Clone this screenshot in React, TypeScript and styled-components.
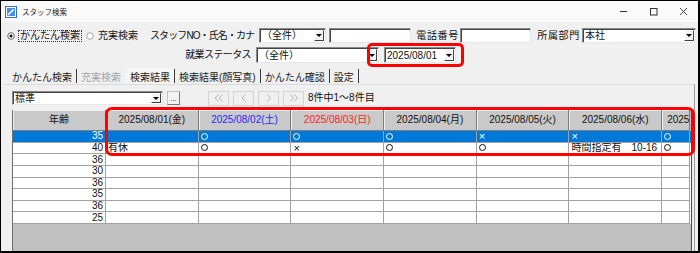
import React from 'react';
import styled, { createGlobalStyle } from 'styled-components';

const GlobalStyle = createGlobalStyle`
  html, body {
    margin: 0;
    padding: 0;
    background: #fff;
  }
  body {
    font-family: "Liberation Sans", "Noto Sans CJK JP", sans-serif;
    font-size: 10px;
    color: #111;
  }
  * {
    box-sizing: border-box;
  }
`;

const Window = styled.div`
  position: relative;
  width: 700px;
  height: 253px;
  border-style: solid;
  border-color: #000;
  border-width: 1px 2px 2px 1px;
  display: flex;
  flex-direction: column;
  background: #f0f0f0;
  overflow: hidden;
`;

const TitleBar = styled.div`
  height: 21px;
  flex: none;
  display: flex;
  align-items: center;
  padding-left: 4px;
  background: #fafafa;
`;

const TitleText = styled.span`
  margin-left: 5px;
  font-size: 7.5px;
  color: #222;
`;

const WinControls = styled.div`
  margin-left: auto;
  display: flex;
  height: 100%;
`;

const WinButton = styled.div`
  width: 30px;
  height: 100%;
  display: flex;
  align-items: center;
  justify-content: center;
`;

const FormRow = styled.div<{ $mt: number; $h: number }>`
  display: flex;
  align-items: center;
  height: ${p => p.$h}px;
  margin-top: ${p => p.$mt}px;
  padding-left: 6px;
  flex: none;
`;

const RadioWrap = styled.span<{ $ml?: number }>`
  display: flex;
  margin-left: ${p => p.$ml ?? 0}px;
`;

const RadioLabel = styled.span<{ $focus?: boolean; $ml?: number }>`
  margin-left: ${p => p.$ml ?? 3}px;
  padding: 0 1px;
  line-height: 10px;
  white-space: nowrap;
  border: 1px dotted ${p => (p.$focus ? '#333' : 'transparent')};
`;

const Label = styled.span<{ $w: number; $ml?: number; $ls?: number }>`
  width: ${p => p.$w}px;
  margin-left: ${p => p.$ml ?? 0}px;
  letter-spacing: ${p => p.$ls ?? 0}px;
  text-align: right;
  white-space: nowrap;
  line-height: 10px;
`;

const Sunken = styled.div<{ $w: number; $ml?: number }>`
  width: ${p => p.$w}px;
  margin-left: ${p => p.$ml ?? 0}px;
  height: 100%;
  display: flex;
  align-items: center;
  background: #fff;
  border-style: solid;
  border-width: 1px;
  border-color: #8a8a8a #e6e6e6 #e6e6e6 #8a8a8a;
  box-shadow: inset 1px 1px 0 #444;
  padding-left: 2px;
  flex: none;
`;

const SelectText = styled.span`
  flex: 1;
  white-space: nowrap;
  overflow: hidden;
  line-height: 10px;
  padding-top: 1px;
`;

const DropBtn = styled.span`
  width: 10px;
  height: calc(100% - 2px);
  margin-right: 1px;
  background: #f2f2f2;
  border: 1px solid;
  border-color: #fff #404040 #404040 #fff;
  display: flex;
  align-items: center;
  justify-content: center;
  flex: none;
  &::after {
    content: '';
    border-left: 3px solid transparent;
    border-right: 3px solid transparent;
    border-top: 3px solid #000;
  }
`;

const TabStrip = styled.div`
  display: flex;
  align-items: center;
  height: 16px;
  margin-top: 5px;
  padding-left: 7px;
  flex: none;
`;

const Tab = styled.span<{ $disabled?: boolean; $active?: boolean }>`
  padding: 0 4px;
  height: 100%;
  display: flex;
  align-items: center;
  white-space: nowrap;
  color: ${p => (p.$disabled ? '#a3a3a3' : '#1a1a1a')};
  background: ${p => (p.$active ? '#f6f6f6' : 'transparent')};
`;

const TabSep = styled.span<{ $hidden?: boolean }>`
  width: 1px;
  height: 14px;
  background: ${p => (p.$hidden ? 'transparent' : '#3a3a3a')};
`;

const Panel = styled.div`
  flex: 1;
  min-height: 0;
  display: flex;
  flex-direction: column;
  margin: 0 3px 0 3px;
  border-top: 1px solid #dadada;
  border-right: 1px solid #9a9a9a;
  padding-top: 6px;
`;

const Toolbar = styled.div`
  display: flex;
  align-items: center;
  height: 14px;
  padding-left: 8px;
  flex: none;
`;

const DotsButton = styled.div`
  width: 13px;
  height: 14px;
  margin-left: 4px;
  background: #f3f3f3;
  border: 1px solid;
  border-color: #c4c4c4 #7a7a7a #7a7a7a #c4c4c4;
  display: flex;
  align-items: flex-end;
  justify-content: center;
  font-size: 8px;
  line-height: 8px;
  padding-bottom: 1px;
`;

const Pager = styled.div`
  display: flex;
  gap: 4px;
  margin-left: 28px;
  height: 15px;
`;

const PageButton = styled.div`
  width: 21px;
  height: 100%;
  background: #f0f0f0;
  border: 1px solid #d2d2d2;
  display: flex;
  align-items: center;
  justify-content: center;
`;

const PageText = styled.span`
  margin-left: 4px;
  white-space: nowrap;
  line-height: 10px;
`;

const Grid = styled.div`
  flex: 1;
  min-height: 0;
  margin: 5px 0 0 8px;
  width: 680px;
  background: #c0c0c0;
  border-left: 1px solid #6e6e6e;
  border-right: 1px solid #4a4a4a;
  overflow: hidden;
`;

const COLS = '93px repeat(6, 92.7px) 28px';

const HeaderRow = styled.div`
  display: grid;
  grid-template-columns: ${COLS};
  height: 21px;
`;

const HeaderCell = styled.div<{ $color?: string; $clip?: boolean }>`
  background: #c9c9c9;
  color: ${p => p.$color ?? '#111'};
  border-right: 1px solid #7c7c7c;
  border-bottom: 1px solid #7c7c7c;
  box-shadow: inset 1px 1px 0 #efefef;
  display: flex;
  align-items: center;
  justify-content: ${p => (p.$clip ? 'flex-start' : 'center')};
  padding-left: ${p => (p.$clip ? 5 : 0)}px;
  white-space: nowrap;
  overflow: hidden;
  line-height: 10px;
`;

const Row = styled.div<{ $selected?: boolean }>`
  display: grid;
  grid-template-columns: ${COLS};
  height: 11.625px;
  background: ${p => (p.$selected ? '#0078d7' : '#fff')};
  color: ${p => (p.$selected ? '#fff' : '#111')};
`;

const Cell = styled.div<{ $right?: boolean }>`
  border-right: 1px solid #a2a2a2;
  border-bottom: 1px solid #a2a2a2;
  display: flex;
  align-items: center;
  justify-content: ${p => (p.$right ? 'flex-end' : 'flex-start')};
  padding: 0 ${p => (p.$right ? 2 : 0)}px 0 ${p => (p.$right ? 0 : 2)}px;
  line-height: 10px;
  white-space: nowrap;
  overflow: hidden;
`;

const Circle = styled.span`
  width: 7px;
  height: 7px;
  border: 1px solid currentColor;
  border-radius: 50%;
`;

const Cross = styled.span`
  font-size: 11px;
  line-height: 10px;
`;

const TimeCell = styled.span`
  flex: 1;
  display: flex;
  justify-content: space-between;
  padding-right: 4px;
`;

const Highlight = styled.div<{ $x: number; $y: number; $w: number; $h: number; $r: number }>`
  position: absolute;
  left: ${p => p.$x}px;
  top: ${p => p.$y}px;
  width: ${p => p.$w}px;
  height: ${p => p.$h}px;
  border: 3px solid #ff0000;
  border-radius: ${p => p.$r}px;
  pointer-events: none;
`;

const Radio = ({ checked }: { checked?: boolean }) => (
  <svg width="8" height="8" viewBox="0 0 8 8">
    <circle cx="4" cy="4" r="3.3" fill="#fff" stroke={checked ? '#555' : '#9a9a9a'} strokeWidth="0.9" />
    {checked && <circle cx="4" cy="4" r="1.5" fill="#111" />}
  </svg>
);

const AppIcon = () => (
  <svg width="12" height="12" viewBox="0 0 12 12">
    <rect x="0.5" y="0.5" width="11" height="11" fill="#fff" stroke="#2f6fc9" />
    <rect x="2" y="2" width="8" height="8" fill="#4a8ee0" />
    <path d="M3.2 8.8 L8.5 3.5" stroke="#fff" strokeWidth="1.6" />
    <path d="M2.6 9.4 L3 7.8 L4.2 9z" fill="#fff" />
  </svg>
);

const Chevrons = ({ dir, double }: { dir: 'l' | 'r'; double?: boolean }) => {
  const one = dir === 'l' ? 'M4.5 0.5 L1 4 L4.5 7.5' : 'M1 0.5 L4.5 4 L1 7.5';
  return (
    <svg width={double ? 9 : 6} height="8" viewBox={`0 0 ${double ? 9 : 6} 8`}>
      <path d={one} fill="none" stroke="#a8a8a8" strokeWidth="0.9" />
      {double && <path d={one} transform="translate(4 0)" fill="none" stroke="#a8a8a8" strokeWidth="0.9" />}
    </svg>
  );
};

const headers = [
  { text: '2025/08/01(金)' },
  { text: '2025/08/02(土)', color: '#2626ff' },
  { text: '2025/08/03(日)', color: '#ff2222' },
  { text: '2025/08/04(月)' },
  { text: '2025/08/05(火)' },
  { text: '2025/08/06(水)' },
  { text: '2025', clip: true },
];

const rows: { age: number; selected?: boolean; cells: string[] }[] = [
  { age: 35, selected: true, cells: ['', 'o', 'o', 'o', 'x', 'x', 'o'] },
  { age: 40, cells: ['有休', 'o', 'x', 'o', 'o', 'time', 'o'] },
  { age: 36, cells: ['', '', '', '', '', '', ''] },
  { age: 30, cells: ['', '', '', '', '', '', ''] },
  { age: 36, cells: ['', '', '', '', '', '', ''] },
  { age: 35, cells: ['', '', '', '', '', '', ''] },
  { age: 36, cells: ['', '', '', '', '', '', ''] },
  { age: 25, cells: ['', '', '', '', '', '', ''] },
];

const renderCell = (v: string) => {
  if (v === 'o') return <Circle />;
  if (v === 'x') return <Cross>×</Cross>;
  if (v === 'time')
    return (
      <TimeCell>
        <span>時間指定有</span>
        <span>10-16</span>
      </TimeCell>
    );
  return v;
};

const App: React.FC = () => {
  return (
    <>
      <GlobalStyle />
      <Window>
        <TitleBar>
          <AppIcon />
          <TitleText>スタッフ検索</TitleText>
          <WinControls>
            <WinButton>
              <svg width="9" height="9" viewBox="0 0 9 9">
                <path d="M1 4.5 H8" stroke="#333" strokeWidth="1" />
              </svg>
            </WinButton>
            <WinButton>
              <svg width="9" height="9" viewBox="0 0 9 9">
                <rect x="1.5" y="1.5" width="6.5" height="6.5" fill="none" stroke="#333" strokeWidth="1" />
              </svg>
            </WinButton>
            <WinButton>
              <svg width="9" height="9" viewBox="0 0 9 9">
                <path d="M1 1 L8 8 M8 1 L1 8" stroke="#333" strokeWidth="0.9" />
              </svg>
            </WinButton>
          </WinControls>
        </TitleBar>

        <FormRow $mt={6} $h={15}>
          <Radio checked />
          <RadioLabel $focus>かんたん検索</RadioLabel>
          <RadioWrap $ml={4}>
            <Radio />
          </RadioWrap>
          <RadioLabel $ml={2}>充実検索</RadioLabel>
          <Label $w={104} $ml={10} $ls={-0.9}>スタッフNO・氏名・カナ</Label>
          <Sunken $w={67} $ml={5}>
            <SelectText>（全件）</SelectText>
            <DropBtn />
          </Sunken>
          <Sunken $w={82} $ml={3} />
          <Label $w={43} $ml={5} $ls={0.7}>電話番号</Label>
          <Sunken $w={71} $ml={1} />
          <Label $w={43} $ml={6} $ls={0.7}>所属部門</Label>
          <Sunken $w={114} $ml={2}>
            <SelectText>本社</SelectText>
            <DropBtn />
          </Sunken>
        </FormRow>

        <FormRow $mt={4} $h={16}>
          <Label $w={244} $ls={-0.6}>就業ステータス</Label>
          <Sunken $w={123} $ml={5}>
            <SelectText>（全件）</SelectText>
            <DropBtn />
          </Sunken>
          <Sunken $w={72} $ml={5}>
            <SelectText>2025/08/01</SelectText>
            <DropBtn />
          </Sunken>
        </FormRow>

        <TabStrip>
          <Tab>かんたん検索</Tab>
          <TabSep />
          <Tab $disabled>充実検索</Tab>
          <TabSep $hidden />
          <Tab $active>検索結果</Tab>
          <TabSep />
          <Tab>検索結果(顔写真)</Tab>
          <TabSep />
          <Tab>かんたん確認</Tab>
          <TabSep />
          <Tab>設定</Tab>
          <TabSep />
        </TabStrip>

        <Panel>
          <Toolbar>
            <Sunken $w={151}>
              <SelectText>標準</SelectText>
              <DropBtn />
            </Sunken>
            <DotsButton>...</DotsButton>
            <Pager>
              <PageButton>
                <Chevrons dir="l" double />
              </PageButton>
              <PageButton>
                <Chevrons dir="l" />
              </PageButton>
              <PageButton>
                <Chevrons dir="r" />
              </PageButton>
              <PageButton>
                <Chevrons dir="r" double />
              </PageButton>
            </Pager>
            <PageText>8件中1～8件目</PageText>
          </Toolbar>

          <Grid>
            <HeaderRow>
              <HeaderCell>年齢</HeaderCell>
              {headers.map(h => (
                <HeaderCell key={h.text} $color={h.color} $clip={h.clip}>
                  {h.text}
                </HeaderCell>
              ))}
            </HeaderRow>
            {rows.map((r, i) => (
              <Row key={i} $selected={r.selected}>
                <Cell $right>{r.age}</Cell>
                {r.cells.map((c, j) => (
                  <Cell key={j}>{renderCell(c)}</Cell>
                ))}
              </Row>
            ))}
          </Grid>
        </Panel>

        <Highlight $x={366} $y={42} $w={97} $h={24} $r={5} />
        <Highlight $x={104} $y={106} $w={590} $h={49} $r={7} />
      </Window>
    </>
  );
};

export default App;
